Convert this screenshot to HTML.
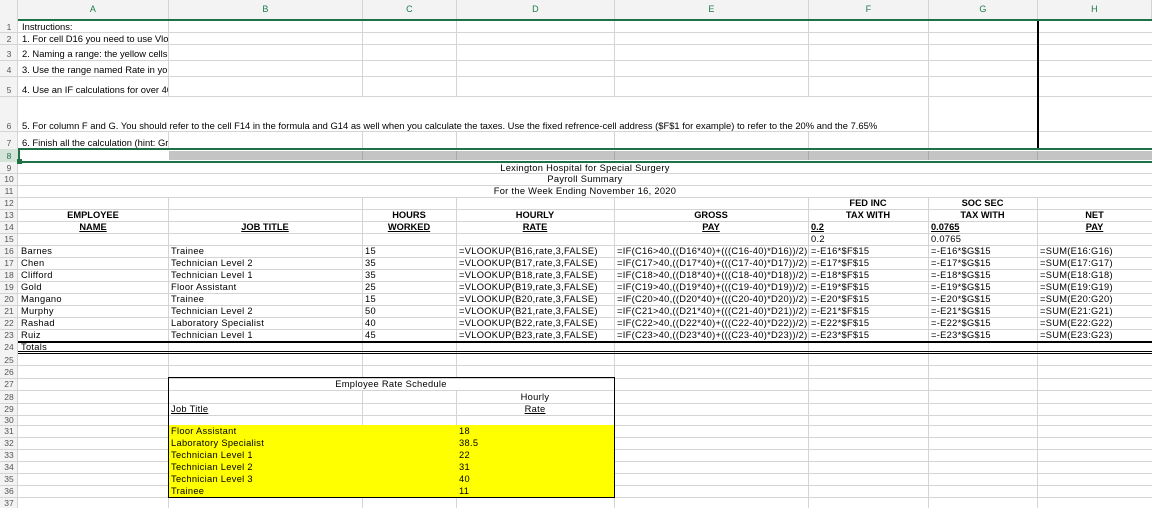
<!DOCTYPE html>
<html><head><meta charset="utf-8"><style>
*{margin:0;padding:0;box-sizing:border-box}
body{width:1152px;height:508px;overflow:hidden;background:#fff;position:relative;font-family:"Liberation Sans",Arial,sans-serif;font-size:9.3px;letter-spacing:0.3px;color:#000}
div{position:absolute}
.h{height:1px;background:#d4d4d4;left:0;width:1152px}
.v{width:1px;background:#d4d4d4}
.t{white-space:nowrap;overflow:hidden;height:12px;line-height:12px;padding-left:3px}
.c{text-align:center;padding-left:0}
.b{font-weight:bold;letter-spacing:0}
.u{text-decoration:underline}
.rn{left:0;width:18px;text-align:center;height:12px;line-height:12px;color:#555;font-size:8.5px;letter-spacing:0}
.ch{top:0;height:19px;line-height:19px;text-align:center;color:#1e7b4b;font-size:9px;background:#f3f3f3;border-right:1px solid #d4d4d4}
.i{font-size:9.4px;letter-spacing:0}
</style></head><body>
<div style="left:0;top:0;width:1152px;height:19px;background:#f3f3f3;border-top:1px solid #aaa"></div>
<div class="ch" style="left:0;width:18px"></div>
<div class="ch" style="left:18px;width:151px">A</div>
<div class="ch" style="left:169px;width:194px">B</div>
<div class="ch" style="left:363px;width:94px">C</div>
<div class="ch" style="left:457px;width:158px">D</div>
<div class="ch" style="left:615px;width:194px">E</div>
<div class="ch" style="left:809px;width:120px">F</div>
<div class="ch" style="left:929px;width:109px">G</div>
<div class="ch" style="left:1038px;width:114px">H</div>
<div style="left:0;top:19px;width:18px;height:489px;background:#f3f3f3;border-right:1px solid #d4d4d4"></div>
<div style="left:18px;top:19px;width:1134px;height:2px;background:#1e7145"></div>

<div class="h" style="top:32px"></div><div class="h" style="top:44px"></div><div class="h" style="top:60px"></div><div class="h" style="top:76px"></div><div class="h" style="top:96px"></div><div class="h" style="top:131px"></div>
<div class="h" style="top:173px"></div><div class="h" style="top:185px"></div><div class="h" style="top:197px"></div><div class="h" style="top:209px"></div><div class="h" style="top:221px"></div><div class="h" style="top:233px"></div><div class="h" style="top:245px"></div><div class="h" style="top:257px"></div><div class="h" style="top:269px"></div><div class="h" style="top:281px"></div><div class="h" style="top:293px"></div><div class="h" style="top:305px"></div><div class="h" style="top:317px"></div><div class="h" style="top:329px"></div>
<div class="h" style="top:365px"></div><div class="h" style="top:378px"></div><div class="h" style="top:390px"></div><div class="h" style="top:403px"></div><div class="h" style="top:415px"></div><div class="h" style="top:425px"></div><div class="h" style="top:437px"></div><div class="h" style="top:449px"></div><div class="h" style="top:461px"></div><div class="h" style="top:473px"></div><div class="h" style="top:485px"></div><div class="h" style="top:497px"></div>

<div class="v" style="left:168px;top:21px;height:75px"></div>
<div class="v" style="left:362px;top:21px;height:75px"></div>
<div class="v" style="left:456px;top:21px;height:75px"></div>
<div class="v" style="left:614px;top:21px;height:75px"></div>
<div class="v" style="left:808px;top:21px;height:75px"></div>
<div class="v" style="left:928px;top:21px;height:128px"></div>
<div class="v" style="left:168px;top:131px;height:18px"></div>
<div class="v" style="left:362px;top:131px;height:18px"></div>
<div class="v" style="left:456px;top:131px;height:18px"></div>
<div class="v" style="left:614px;top:131px;height:18px"></div>
<div class="v" style="left:808px;top:131px;height:18px"></div>
<div style="left:1037px;top:21px;width:2px;height:128px;background:#000"></div>

<div style="left:169px;top:151px;width:983px;height:9px;background:#c4c4c4"></div>
<div class="v" style="left:362px;top:151px;height:9px;background:#aaa"></div>
<div class="v" style="left:456px;top:151px;height:9px;background:#aaa"></div>
<div class="v" style="left:614px;top:151px;height:9px;background:#aaa"></div>
<div class="v" style="left:808px;top:151px;height:9px;background:#aaa"></div>
<div class="v" style="left:928px;top:151px;height:9px;background:#aaa"></div>
<div class="v" style="left:1037px;top:151px;height:9px;background:#aaa"></div>
<div style="left:0;top:149px;width:18px;height:13px;background:#d3e3d8"></div>
<div style="left:18px;top:148px;width:1134px;height:2px;background:#1e7145"></div>
<div style="left:18px;top:161px;width:1134px;height:2px;background:#1e7145"></div>
<div style="left:17px;top:159px;width:5px;height:5px;background:#1e7145"></div>
<div style="left:18px;top:150px;width:2px;height:11px;background:#1e7145"></div>

<div class="v" style="left:168px;top:197px;height:311px"></div>
<div class="v" style="left:362px;top:197px;height:181px"></div>
<div class="v" style="left:456px;top:197px;height:181px"></div>
<div class="v" style="left:362px;top:390px;height:35px"></div>
<div class="v" style="left:456px;top:390px;height:35px"></div>
<div class="v" style="left:362px;top:497px;height:11px"></div>
<div class="v" style="left:456px;top:497px;height:11px"></div>
<div class="v" style="left:614px;top:197px;height:311px"></div>
<div class="v" style="left:808px;top:197px;height:311px"></div>
<div class="v" style="left:928px;top:197px;height:311px"></div>
<div class="v" style="left:1037px;top:197px;height:311px"></div>

<div style="left:18px;top:341px;width:1134px;height:2px;background:#000"></div>
<div style="left:18px;top:351px;width:1134px;height:1px;background:#000"></div>
<div style="left:18px;top:353px;width:1134px;height:1px;background:#000"></div>

<div style="left:169px;top:425px;width:445px;height:72px;background:#ffff00"></div>
<div style="left:168px;top:377px;width:447px;height:121px;border:1px solid #000"></div>

<div class="rn" style="top:21px">1</div><div class="rn" style="top:33px">2</div><div class="rn" style="top:48px">3</div><div class="rn" style="top:64px">4</div><div class="rn" style="top:84px">5</div><div class="rn" style="top:120px">6</div><div class="rn" style="top:137px">7</div><div class="rn" style="top:150px;color:#1e7145">8</div>
<div class="rn" style="top:162px">9</div><div class="rn" style="top:173px">10</div><div class="rn" style="top:185px">11</div><div class="rn" style="top:197px">12</div><div class="rn" style="top:209px">13</div><div class="rn" style="top:221px">14</div><div class="rn" style="top:233px">15</div><div class="rn" style="top:245px">16</div><div class="rn" style="top:257px">17</div><div class="rn" style="top:269px">18</div><div class="rn" style="top:281px">19</div><div class="rn" style="top:293px">20</div><div class="rn" style="top:305px">21</div><div class="rn" style="top:317px">22</div><div class="rn" style="top:329px">23</div><div class="rn" style="top:341px">24</div><div class="rn" style="top:354px">25</div><div class="rn" style="top:366px">26</div><div class="rn" style="top:378px">27</div><div class="rn" style="top:391px">28</div><div class="rn" style="top:403px">29</div><div class="rn" style="top:414px">30</div><div class="rn" style="top:425px">31</div><div class="rn" style="top:437px">32</div><div class="rn" style="top:449px">33</div><div class="rn" style="top:461px">34</div><div class="rn" style="top:473px">35</div><div class="rn" style="top:485px">36</div><div class="rn" style="top:497px">37</div>

<div class="t i" style="left:19px;top:21px;width:149px">Instructions:</div>
<div class="t i" style="left:19px;top:33px;width:149px">1. For cell D16 you need to use Vlookup</div>
<div class="t i" style="left:19px;top:48px;width:149px">2. Naming a range: the yellow cells</div>
<div class="t i" style="left:19px;top:64px;width:149px">3. Use the range named Rate in your</div>
<div class="t i" style="left:19px;top:84px;width:149px">4. Use an IF calculations for over 40</div>
<div class="t i" style="left:19px;top:120px;width:900px">5. For column F and G. You should refer to the cell F14 in the formula and G14 as well when you calculate the taxes. Use the fixed refrence-cell address ($F$1 for example) to refer to the 20% and the 7.65%</div>
<div class="t i" style="left:19px;top:137px;width:149px">6. Finish all the calculation (hint: Gross</div>

<div class="t c" style="left:18px;top:162px;width:1134px">Lexington Hospital for Special Surgery</div>
<div class="t c" style="left:18px;top:173px;width:1134px">Payroll Summary</div>
<div class="t c" style="left:18px;top:185px;width:1134px">For the Week Ending November 16, 2020</div>

<div class="t c b" style="left:808px;top:197px;width:120px">FED INC</div>
<div class="t c b" style="left:928px;top:197px;width:109px">SOC SEC</div>
<div class="t c b" style="left:18px;top:209px;width:150px">EMPLOYEE</div>
<div class="t c b" style="left:362px;top:209px;width:94px">HOURS</div>
<div class="t c b" style="left:456px;top:209px;width:158px">HOURLY</div>
<div class="t c b" style="left:614px;top:209px;width:194px">GROSS</div>
<div class="t c b" style="left:808px;top:209px;width:120px">TAX WITH</div>
<div class="t c b" style="left:928px;top:209px;width:109px">TAX WITH</div>
<div class="t c b" style="left:1037px;top:209px;width:115px">NET</div>
<div class="t c b u" style="left:18px;top:221px;width:150px">NAME</div>
<div class="t c b u" style="left:168px;top:221px;width:194px">JOB TITLE</div>
<div class="t c b u" style="left:362px;top:221px;width:94px">WORKED</div>
<div class="t c b u" style="left:456px;top:221px;width:158px">RATE</div>
<div class="t c b u" style="left:614px;top:221px;width:194px">PAY</div>
<div class="t b u" style="left:808px;top:221px;width:120px">0.2</div>
<div class="t b u" style="left:928px;top:221px;width:109px">0.0765</div>
<div class="t c b u" style="left:1037px;top:221px;width:115px">PAY</div>
<div class="t" style="left:808px;top:233px;width:120px">0.2</div>
<div class="t" style="left:928px;top:233px;width:109px">0.0765</div>

<div class="t" style="left:18px;top:245px;width:150px">Barnes</div><div class="t" style="left:168px;top:245px;width:194px">Trainee</div><div class="t" style="left:362px;top:245px;width:94px">15</div><div class="t" style="left:456px;top:245px;width:158px">=VLOOKUP(B16,rate,3,FALSE)</div><div class="t" style="left:614px;top:245px;width:194px">=IF(C16&gt;40,((D16*40)+(((C16-40)*D16))/2),D16*C16)</div><div class="t" style="left:808px;top:245px;width:120px">=-E16*$F$15</div><div class="t" style="left:928px;top:245px;width:109px">=-E16*$G$15</div><div class="t" style="left:1037px;top:245px;width:115px">=SUM(E16:G16)</div>
<div class="t" style="left:18px;top:257px;width:150px">Chen</div><div class="t" style="left:168px;top:257px;width:194px">Technician Level 2</div><div class="t" style="left:362px;top:257px;width:94px">35</div><div class="t" style="left:456px;top:257px;width:158px">=VLOOKUP(B17,rate,3,FALSE)</div><div class="t" style="left:614px;top:257px;width:194px">=IF(C17&gt;40,((D17*40)+(((C17-40)*D17))/2),D17*C17)</div><div class="t" style="left:808px;top:257px;width:120px">=-E17*$F$15</div><div class="t" style="left:928px;top:257px;width:109px">=-E17*$G$15</div><div class="t" style="left:1037px;top:257px;width:115px">=SUM(E17:G17)</div>
<div class="t" style="left:18px;top:269px;width:150px">Clifford</div><div class="t" style="left:168px;top:269px;width:194px">Technician Level 1</div><div class="t" style="left:362px;top:269px;width:94px">35</div><div class="t" style="left:456px;top:269px;width:158px">=VLOOKUP(B18,rate,3,FALSE)</div><div class="t" style="left:614px;top:269px;width:194px">=IF(C18&gt;40,((D18*40)+(((C18-40)*D18))/2),D18*C18)</div><div class="t" style="left:808px;top:269px;width:120px">=-E18*$F$15</div><div class="t" style="left:928px;top:269px;width:109px">=-E18*$G$15</div><div class="t" style="left:1037px;top:269px;width:115px">=SUM(E18:G18)</div>
<div class="t" style="left:18px;top:281px;width:150px">Gold</div><div class="t" style="left:168px;top:281px;width:194px">Floor Assistant</div><div class="t" style="left:362px;top:281px;width:94px">25</div><div class="t" style="left:456px;top:281px;width:158px">=VLOOKUP(B19,rate,3,FALSE)</div><div class="t" style="left:614px;top:281px;width:194px">=IF(C19&gt;40,((D19*40)+(((C19-40)*D19))/2),D19*C19)</div><div class="t" style="left:808px;top:281px;width:120px">=-E19*$F$15</div><div class="t" style="left:928px;top:281px;width:109px">=-E19*$G$15</div><div class="t" style="left:1037px;top:281px;width:115px">=SUM(E19:G19)</div>
<div class="t" style="left:18px;top:293px;width:150px">Mangano</div><div class="t" style="left:168px;top:293px;width:194px">Trainee</div><div class="t" style="left:362px;top:293px;width:94px">15</div><div class="t" style="left:456px;top:293px;width:158px">=VLOOKUP(B20,rate,3,FALSE)</div><div class="t" style="left:614px;top:293px;width:194px">=IF(C20&gt;40,((D20*40)+(((C20-40)*D20))/2),D20*C20)</div><div class="t" style="left:808px;top:293px;width:120px">=-E20*$F$15</div><div class="t" style="left:928px;top:293px;width:109px">=-E20*$G$15</div><div class="t" style="left:1037px;top:293px;width:115px">=SUM(E20:G20)</div>
<div class="t" style="left:18px;top:305px;width:150px">Murphy</div><div class="t" style="left:168px;top:305px;width:194px">Technician Level 2</div><div class="t" style="left:362px;top:305px;width:94px">50</div><div class="t" style="left:456px;top:305px;width:158px">=VLOOKUP(B21,rate,3,FALSE)</div><div class="t" style="left:614px;top:305px;width:194px">=IF(C21&gt;40,((D21*40)+(((C21-40)*D21))/2),D21*C21)</div><div class="t" style="left:808px;top:305px;width:120px">=-E21*$F$15</div><div class="t" style="left:928px;top:305px;width:109px">=-E21*$G$15</div><div class="t" style="left:1037px;top:305px;width:115px">=SUM(E21:G21)</div>
<div class="t" style="left:18px;top:317px;width:150px">Rashad</div><div class="t" style="left:168px;top:317px;width:194px">Laboratory Specialist</div><div class="t" style="left:362px;top:317px;width:94px">40</div><div class="t" style="left:456px;top:317px;width:158px">=VLOOKUP(B22,rate,3,FALSE)</div><div class="t" style="left:614px;top:317px;width:194px">=IF(C22&gt;40,((D22*40)+(((C22-40)*D22))/2),D22*C22)</div><div class="t" style="left:808px;top:317px;width:120px">=-E22*$F$15</div><div class="t" style="left:928px;top:317px;width:109px">=-E22*$G$15</div><div class="t" style="left:1037px;top:317px;width:115px">=SUM(E22:G22)</div>
<div class="t" style="left:18px;top:329px;width:150px">Ruiz</div><div class="t" style="left:168px;top:329px;width:194px">Technician Level 1</div><div class="t" style="left:362px;top:329px;width:94px">45</div><div class="t" style="left:456px;top:329px;width:158px">=VLOOKUP(B23,rate,3,FALSE)</div><div class="t" style="left:614px;top:329px;width:194px">=IF(C23&gt;40,((D23*40)+(((C23-40)*D23))/2),D23*C23)</div><div class="t" style="left:808px;top:329px;width:120px">=-E23*$F$15</div><div class="t" style="left:928px;top:329px;width:109px">=-E23*$G$15</div><div class="t" style="left:1037px;top:329px;width:115px">=SUM(E23:G23)</div>
<div class="t" style="left:18px;top:341px;width:150px">Totals</div>

<div class="t c" style="left:168px;top:378px;width:446px">Employee Rate Schedule</div>
<div class="t c" style="left:456px;top:391px;width:158px">Hourly</div>
<div class="t u" style="left:168px;top:403px;width:194px">Job Title</div>
<div class="t c u" style="left:456px;top:403px;width:158px">Rate</div>
<div class="t" style="left:168px;top:425px;width:194px">Floor Assistant</div><div class="t" style="left:456px;top:425px;width:158px">18</div>
<div class="t" style="left:168px;top:437px;width:194px">Laboratory Specialist</div><div class="t" style="left:456px;top:437px;width:158px">38.5</div>
<div class="t" style="left:168px;top:449px;width:194px">Technician Level 1</div><div class="t" style="left:456px;top:449px;width:158px">22</div>
<div class="t" style="left:168px;top:461px;width:194px">Technician Level 2</div><div class="t" style="left:456px;top:461px;width:158px">31</div>
<div class="t" style="left:168px;top:473px;width:194px">Technician Level 3</div><div class="t" style="left:456px;top:473px;width:158px">40</div>
<div class="t" style="left:168px;top:485px;width:194px">Trainee</div><div class="t" style="left:456px;top:485px;width:158px">11</div>
</body></html>
